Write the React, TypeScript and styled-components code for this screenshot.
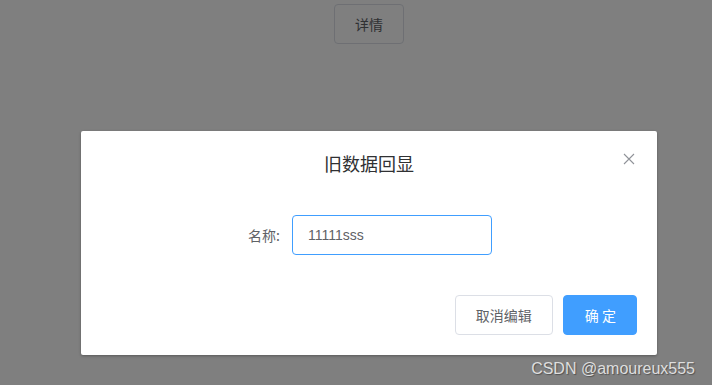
import React from "react";
import styled, { createGlobalStyle } from "styled-components";

const Global = createGlobalStyle`
  html, body { margin: 0; padding: 0; width: 712px; height: 385px; overflow: hidden; background: #fff; }
  body { font-family: "Liberation Sans", "Noto Sans CJK SC", sans-serif; }
  * { box-sizing: border-box; }
`;

const Page = styled.div`
  width: 712px;
  height: 385px;
  position: relative;
`;

const TopBar = styled.div`
  display: flex;
  justify-content: center;
  padding: 4px 0 0 26px;
`;

const Button = styled.button<{ $primary?: boolean }>`
  font-family: "Noto Sans CJK SC", sans-serif;
  font-size: 14px;
  line-height: 14px;
  height: 40px;
  padding: ${(p) => (p.$primary ? "12px 20px 12px 21px" : "12px 20px")};
  border-radius: 4px;
  border: 1px solid ${(p) => (p.$primary ? "#409eff" : "#dcdfe6")};
  background: ${(p) => (p.$primary ? "#409eff" : "#fff")};
  color: ${(p) => (p.$primary ? "#fff" : "#606266")};
  cursor: pointer;
  white-space: pre;
  & + & { margin-left: 10px; }
`;

const Overlay = styled.div`
  position: absolute;
  inset: 0;
  background: rgba(0, 0, 0, 0.5);
`;

const Dialog = styled.div`
  position: absolute;
  top: 131px;
  left: 81px;
  width: 576px;
  background: #fff;
  border-radius: 2px;
  box-shadow: 0 1px 3px rgba(0, 0, 0, 0.3);
`;

const Header = styled.div`
  position: relative;
  padding: 20px 20px 10px;
  text-align: center;
`;

const Title = styled.span`
  font-family: "Noto Sans CJK SC", sans-serif;
  font-size: 18px;
  line-height: 24px;
  color: #303133;
`;

const CloseBtn = styled.button`
  position: absolute;
  top: 20px;
  right: 20px;
  width: 16px;
  height: 16px;
  padding: 0;
  border: none;
  background: transparent;
  display: flex;
  align-items: center;
  justify-content: center;
  cursor: pointer;
`;

const Body = styled.div`
  padding: 30px 20px;
  display: flex;
  justify-content: center;
`;

const FormItem = styled.div`
  display: flex;
  align-items: center;
`;

const Label = styled.label`
  width: 46px;
  text-align: right;
  font-size: 14px;
  color: #606266;
  padding-right: 12px;
  line-height: 40px;
  font-family: "Noto Sans CJK SC", sans-serif;
  white-space: nowrap;
`;

const Input = styled.input`
  width: 200px;
  height: 40px;
  border: 1px solid #409eff;
  border-radius: 4px;
  padding: 0 15px;
  font-size: 14px;
  color: #606266;
  font-family: "Liberation Sans", sans-serif;
  outline: none;
`;

const Footer = styled.div`
  padding: 10px 20px 20px;
  display: flex;
  justify-content: flex-end;
`;

const Watermark = styled.div`
  position: absolute;
  right: 17px;
  bottom: 8px;
  font-size: 16px;
  line-height: 16px;
  color: #dedede;
  text-shadow: 1px 1px 1px rgba(0, 0, 0, 0.35);
  font-family: "Liberation Sans", sans-serif;
`;

export default function App() {
  return (
    <Page>
      <Global />
      <TopBar>
        <Button>详情</Button>
      </TopBar>
      <Overlay />
      <Dialog>
        <Header>
          <Title>旧数据回显</Title>
          <CloseBtn aria-label="close">
            <svg width="12" height="12" viewBox="0 0 12 12">
              <path d="M1 1 L11 11 M11 1 L1 11" stroke="#909399" strokeWidth="1.1" fill="none" />
            </svg>
          </CloseBtn>
        </Header>
        <Body>
          <FormItem>
            <Label>名称:</Label>
            <Input defaultValue="11111sss" />
          </FormItem>
        </Body>
        <Footer>
          <Button>取消编辑</Button>
          <Button $primary>{"确 定"}</Button>
        </Footer>
      </Dialog>
      <Watermark>CSDN @amoureux555</Watermark>
    </Page>
  );
}
